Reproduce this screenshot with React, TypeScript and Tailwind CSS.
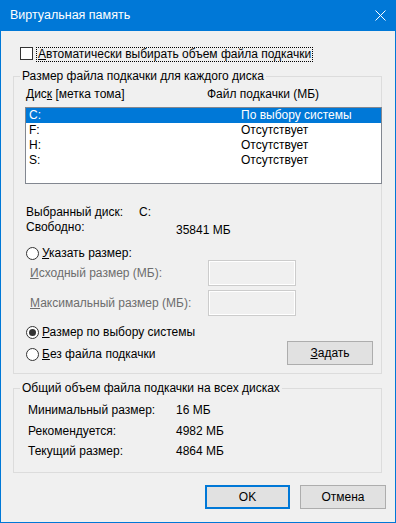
import type { ReactNode } from 'react'

const drives = [
  { letter: 'C:', size: 'По выбору системы', selected: true },
  { letter: 'F:', size: 'Отсутствует', selected: false },
  { letter: 'H:', size: 'Отсутствует', selected: false },
  { letter: 'S:', size: 'Отсутствует', selected: false },
]

const totals = [
  { label: 'Минимальный размер:', value: '16 МБ', gap: 'mt-[7px]' },
  { label: 'Рекомендуется:', value: '4982 МБ', gap: 'mt-[6px]' },
  { label: 'Текущий размер:', value: '4864 МБ', gap: 'mt-[5px]' },
]

function Radio({ checked }: { checked?: boolean }) {
  return (
    <span className="grid size-[13px] shrink-0 place-items-center rounded-full border border-[#333333] bg-white">
      {checked && <span className="size-[7px] rounded-full bg-[#333333]" />}
    </span>
  )
}

function GroupBox({
  title,
  className,
  children,
}: {
  title: string
  className?: string
  children: ReactNode
}) {
  return (
    <section className={`border border-[#dcdcdc] ${className ?? ''}`}>
      <h2 className="-mt-[8px] ml-[6px] w-fit bg-[#f0f0f0] px-[2px] text-[12px] font-normal leading-[15px]">
        {title}
      </h2>
      {children}
    </section>
  )
}

function DisabledField({ label }: { label: ReactNode }) {
  return (
    <div className="flex h-[26px] items-center">
      <span className="w-[194px] pl-[16px] text-[#6d6d6d]">{label}</span>
      <span className="h-[26px] w-[88px] border border-[#cccccc] bg-[#f0f0f0] shadow-[inset_0_0_0_1px_#ffffff]" />
    </div>
  )
}

export default function App() {
  return (
    <div className="h-[523px] w-[396px] bg-[#f0f0f0] font-['Segoe_UI','Liberation_Sans',sans-serif] text-[12px] leading-[15px] text-black">
      <div className="flex h-full flex-col border-x border-b border-[#0078d7]">
        <header className="flex h-[31px] shrink-0 items-center justify-between bg-[#0078d7] pl-[9px] pr-[9px] text-white">
          <span className="text-[12.5px]">Виртуальная память</span>
          <svg width="11" height="11" viewBox="0 0 11 11" aria-label="Закрыть">
            <path d="M0.5 0.5 L10.5 10.5 M10.5 0.5 L0.5 10.5" stroke="#ffffff" strokeWidth="1" />
          </svg>
        </header>

        <div className="flex flex-1 flex-col pl-[12px] pr-[13px]">
          <label className="ml-[7px] mt-[16px] flex items-start">
            <span className="size-[13px] shrink-0 border border-[#333333] bg-white" />
            <span className="ml-[3px] h-[15px] border border-dotted border-black pl-[1px] pr-[1px] leading-[13px]">
              <u>А</u>втоматически выбирать объем файла подкачки
            </span>
          </label>

          <GroupBox title="Размер файла подкачки для каждого диска" className="mt-[14px] pb-[8px]">
            <div className="mt-[3px] flex h-[15px] pl-[12px]">
              <span className="w-[181px]">
                Дис<u>к</u> [метка тома]
              </span>
              <span>Файл подкачки (МБ)</span>
            </div>

            <div className="-mr-[1px] ml-[11px] mt-[5px] h-[77px] border border-[#828790] bg-white">
              {drives.map((drive) => (
                <div
                  key={drive.letter}
                  className={`flex h-[15px] pl-[3px] ${
                    drive.selected ? 'bg-[#0078d7] text-white' : ''
                  }`}
                >
                  <span className="w-[212px]">{drive.letter}</span>
                  <span>{drive.size}</span>
                </div>
              ))}
            </div>

            <div className="mt-[21px] flex h-[15px] pl-[12px]">
              <span className="w-[113px]">Выбранный диск:</span>
              <span>C:</span>
            </div>
            <div className="flex h-[15px] pl-[12px]">
              <span className="w-[150px]">Свободно:</span>
              <span className="mt-[3px]">35841 МБ</span>
            </div>

            <div className="mt-[11px] flex h-[14px] items-center gap-[3px] pl-[12px]">
              <Radio />
              <span>
                <u>У</u>казать размер:
              </span>
            </div>
            <DisabledField
              label={
                <>
                  <u>И</u>сходный размер (МБ):
                </>
              }
            />
            <div className="mt-[4px]">
              <DisabledField
                label={
                  <>
                    <u>М</u>аксимальный размер (МБ):
                  </>
                }
              />
            </div>

            <div className="mt-[9px] flex h-[15px] items-center gap-[3px] pl-[12px]">
              <Radio checked />
              <span>
                <u>Р</u>азмер по выбору системы
              </span>
            </div>
            <div className="mt-[1px] flex items-start justify-between pl-[12px] pr-[8px]">
              <div className="mt-[6px] flex h-[15px] items-center gap-[3px]">
                <Radio />
                <span>
                  <u>Б</u>ез файла подкачки
                </span>
              </div>
              <button
                type="button"
                className="h-[24px] w-[86px] border border-[#adadad] bg-[#e1e1e1] text-[12px]"
              >
                <u>З</u>адать
              </button>
            </div>
          </GroupBox>

          <GroupBox title="Общий объем файла подкачки на всех дисках" className="mt-[14px] pb-[13px]">
            {totals.map((row) => (
              <div key={row.label} className={`${row.gap} flex h-[15px] pl-[14px]`}>
                <span className="w-[148px]">{row.label}</span>
                <span>{row.value}</span>
              </div>
            ))}
          </GroupBox>

          <div className="-mr-[4px] mt-[12px] flex justify-end gap-[10px]">
            <button
              type="button"
              className="h-[24px] w-[85px] border-2 border-[#0078d7] bg-[#e1e1e1] text-[12px]"
            >
              OK
            </button>
            <button
              type="button"
              className="h-[24px] w-[86px] border border-[#adadad] bg-[#e1e1e1] text-[12px]"
            >
              Отмена
            </button>
          </div>
        </div>
      </div>
    </div>
  )
}
